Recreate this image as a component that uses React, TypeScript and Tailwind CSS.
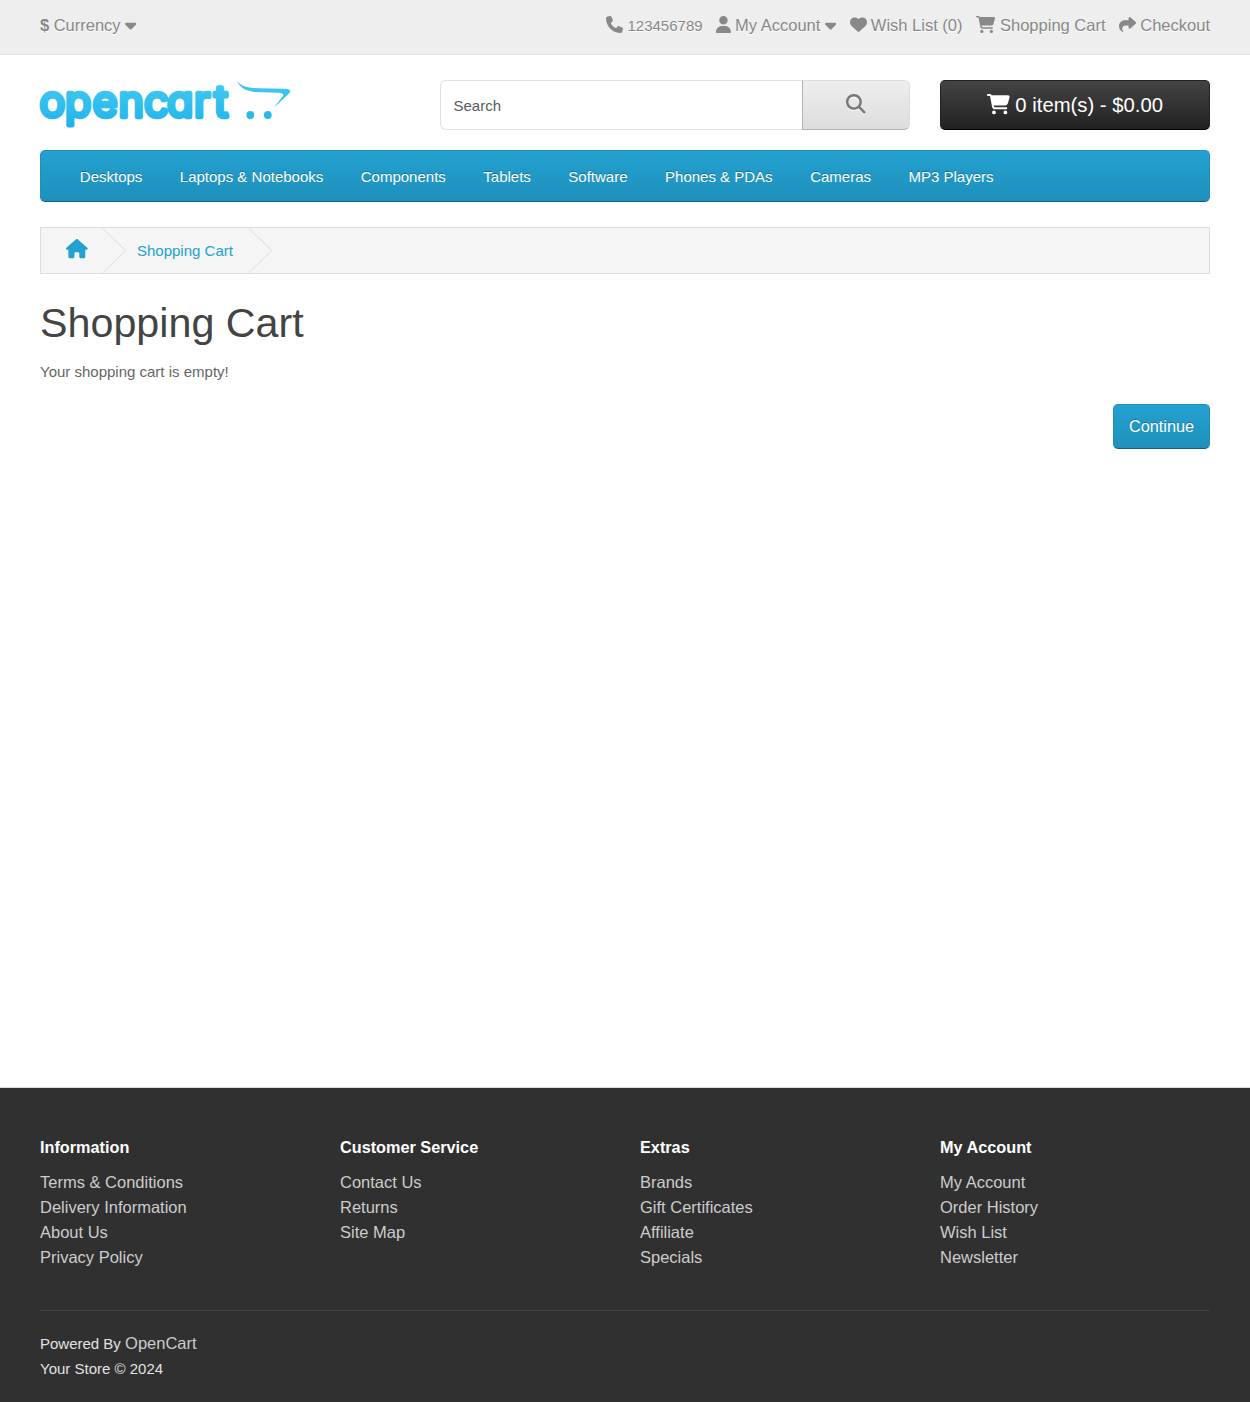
import React from "react";
import { FaPhone, FaUser, FaHeart, FaCartShopping, FaShare, FaCaretDown, FaHouse, FaMagnifyingGlass } from "react-icons/fa6";

const menu = ["Desktops", "Laptops & Notebooks", "Components", "Tablets", "Software", "Phones & PDAs", "Cameras", "MP3 Players"];

const columns = [
  { title: "Information", links: ["Terms & Conditions", "Delivery Information", "About Us", "Privacy Policy"] },
  { title: "Customer Service", links: ["Contact Us", "Returns", "Site Map"] },
  { title: "Extras", links: ["Brands", "Gift Certificates", "Affiliate", "Specials"] },
  { title: "My Account", links: ["My Account", "Order History", "Wish List", "Newsletter"] },
];

function TopBar() {
  return (
    <nav className="h-[55px] border-b border-[#e2e2e2] bg-[#eeeeee] px-10 text-[16.5px] leading-[25px] text-[#888888] [text-shadow:0_1px_0_#fff]">
      <div className="flex justify-between pt-[13px]">
        <a className="flex items-center">
          <strong className="mr-[4.5px]">$</strong>
          Currency
          <FaCaretDown className="mb-px ml-[4.5px] h-[18px] w-[11.3px]" />
        </a>
        <div className="flex items-center gap-[13.6px]">
          <span className="flex items-center">
            <FaPhone className="mr-[4.2px] mb-[1.5px] size-[17px]" />
            <span className="text-[15px]">123456789</span>
          </span>
          <a className="flex items-center">
            <FaUser className="mr-[4px] mb-[1.5px] h-[17px] w-[14.9px]" />
            My Account
            <FaCaretDown className="mb-px ml-[4.4px] h-[18px] w-[11.3px]" />
          </a>
          <a className="flex items-center">
            <FaHeart className="mr-[4.2px] mb-[1.5px] size-[17px]" />
            Wish List (0)
          </a>
          <a className="flex items-center">
            <FaCartShopping className="mr-[4.8px] mb-[1.5px] h-[17px] w-[19.1px]" />
            Shopping Cart
          </a>
          <a className="flex items-center">
            <FaShare className="mr-[4.2px] mb-[1.5px] size-[17px]" />
            Checkout
          </a>
        </div>
      </div>
    </nav>
  );
}

function Logo() {
  return (
    <svg className="block h-[50px] w-[252px] overflow-visible" viewBox="0 0 252 50" aria-label="opencart">
      <defs>
        <linearGradient id="logo" gradientUnits="userSpaceOnUse" x1="0" y1="0" x2="0" y2="48">
          <stop offset="0" stopColor="#44caf1" />
          <stop offset="1" stopColor="#1fb3ea" />
        </linearGradient>
      </defs>
      <text
        x="-0.400 25 52.500 78.500 104 127 154 174"
        y="37"
        fill="url(#logo)"
        stroke="url(#logo)"
        strokeWidth="4.3"
        strokeLinejoin="round"
        className="text-[43px] font-normal [font-family:Inter,sans-serif] [font-feature-settings:'cv11']"
      >
        opencart
      </text>
      <path
        d="M197 1C201 6 208 8 218 8.200L245 8.800C250 9 251.500 11 249 13.500L234 27.500C238 22 241 18.500 243 16C244 14 242 13 238 12.800L215 12C206 11 200 8 197 1Z"
        fill="url(#logo)"
      />
      <circle cx="210.300" cy="35" r="3.900" fill="url(#logo)" />
      <circle cx="227.800" cy="35" r="3.900" fill="url(#logo)" />
    </svg>
  );
}

function Header() {
  return (
    <header className="flex px-10 pt-[25px]">
      <div className="w-[400px]">
        <Logo />
      </div>
      <div className="flex h-[50px] w-[470px]">
        <div className="flex flex-1 items-center rounded-l-[6px] border border-r-0 border-[#dee2e6] pt-0.5 pl-[12.5px] text-[15px] text-[#555b61]">
          Search
        </div>
        <button className="flex w-[108px] items-center justify-center rounded-r-[6px] border border-[#dddddd] border-b-[#b3b3b3] border-l-[#b3b3b3] bg-linear-to-b from-[#eeeeee] to-[#dddddd] pb-[2px] text-[#777777]">
          <FaMagnifyingGlass className="size-[19.5px] drop-shadow-[0_1px_0_#fff]" />
        </button>
      </div>
      <button className="ml-[30px] flex h-[50px] w-[270px] items-center justify-center rounded-[5px] border border-[#222] border-b-black bg-linear-to-b from-[#444444] to-[#222222] text-[20.3px] text-white">
        <FaCartShopping className="mr-[5.6px] mb-px h-[20.3px] w-[22.8px]" />
        0 item(s) - $0.00
      </button>
    </header>
  );
}

function Breadcrumb() {
  return (
    <div className="mt-[25px] flex h-[47px] border border-[#dddddd] bg-[#f5f5f5]">
      <a className="flex w-[61px] items-center pb-[3px] pl-[25px] text-[#23a1d1]">
        <FaHouse className="h-[19.3px] w-[21.7px]" />
      </a>
      <Chevron />
      <a className="flex w-[122px] items-center pt-0.5 pl-[11px] text-[15px] text-[#23a1d1]">Shopping Cart</a>
      <Chevron />
    </div>
  );
}

function Chevron() {
  return (
    <svg className="h-[45px] w-6" viewBox="0 0 24 45" fill="none" stroke="#dddddd">
      <path d="M0.500 0L23.700 22.500L0.500 45" />
    </svg>
  );
}

function Footer() {
  return (
    <footer className="h-[315px] border-t border-[#dddddd] bg-[#303030] px-10 pt-[47px] text-[#e2e2e2]">
      <div className="grid grid-cols-[300px_300px_300px_270px]">
        {columns.map((c) => (
          <div key={c.title}>
            <h5 className="mb-[10px] text-[16.25px] leading-[25px] font-bold text-white">{c.title}</h5>
            <ul className="text-[16.5px] leading-[25px] text-[#cccccc]">
              {c.links.map((l) => (
                <li key={l}>{l}</li>
              ))}
            </ul>
          </div>
        ))}
      </div>
      <hr className="mt-10 border-[#414141]" />
      <p className="mt-5 text-[15px] leading-[25px]">
        Powered By <a className="text-[16.5px] text-[#cccccc]">OpenCart</a>
        <br />
        Your Store © 2024
      </p>
    </footer>
  );
}

export default function App() {
  return (
    <div className="flex h-[1402px] w-[1250px] flex-col overflow-hidden bg-white [font-family:'Liberation_Sans',Arial,sans-serif]">
      <TopBar />
      <Header />
      <main className="flex flex-1 flex-col px-10 pt-5">
        <nav className="flex h-[52px] items-center gap-[37.5px] rounded-[5px] border border-[#1f90bb] border-b-[#145e7a] bg-linear-to-b from-[#23a1d1] to-[#1f90bb] pt-[3px] pl-[38.8px] text-[15px] text-white [text-shadow:0_-1px_0_rgba(0,0,0,0.25)]">
          {menu.map((m) => (
            <a key={m}>{m}</a>
          ))}
        </nav>
        <Breadcrumb />
        <h1 className="mt-[25px] text-[41.25px] leading-[49.5px] text-[#444444]">Shopping Cart</h1>
        <p className="mt-[10px] text-[15px] leading-[25px] text-[#666666]">Your shopping cart is empty!</p>
        <button className="mt-[20.500px] flex h-[45px] w-[97px] items-center justify-center self-end rounded-[5px] border border-[#1f90bb] border-b-[#145e7a] bg-linear-to-b from-[#23a1d1] to-[#1f90bb] text-[16.25px] text-white [text-shadow:0_-1px_0_rgba(0,0,0,0.25)]">
          Continue
        </button>
      </main>
      <Footer />
    </div>
  );
}
